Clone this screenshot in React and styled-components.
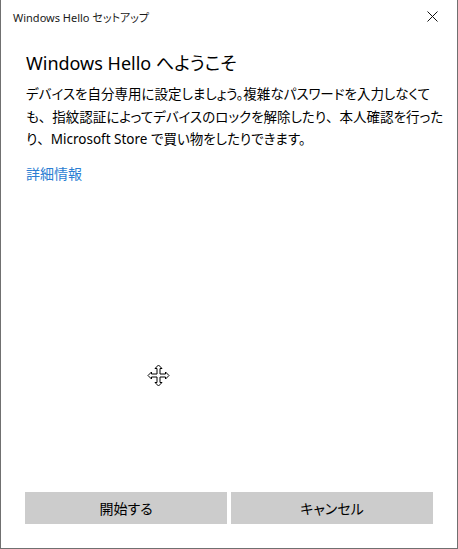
import styled, { createGlobalStyle } from "styled-components";

const Global = createGlobalStyle`
  html, body {
    margin: 0;
    padding: 0;
    background: #ffffff;
  }
  body {
    font-family: "Segoe UI", "Noto Sans", "Noto Sans CJK JP", sans-serif;
  }
`;

const Window = styled.div`
  position: relative;
  width: 458px;
  height: 549px;
  box-sizing: border-box;
  border: 1px solid #707070;
  border-top: none;
  background: #ffffff;
  display: flex;
  flex-direction: column;
`;

const TitleBar = styled.div`
  height: 33px;
  display: flex;
  align-items: center;
  justify-content: space-between;
  padding-left: 12px;
  font-family: "Noto Sans", "Noto Sans CJK JP", sans-serif;
  font-size: 11px;
  color: #1a1a1a;
  font-feature-settings: "palt";
`;

const CloseButton = styled.div`
  width: 46px;
  height: 33px;
  display: flex;
  align-items: center;
  justify-content: center;
  margin-right: 2px;
`;

const Content = styled.div`
  flex: 1;
  padding: 15px 25px 0 25px;
  display: flex;
  flex-direction: column;
`;

const Heading = styled.h1`
  margin: 0;
  font-family: "Noto Sans", "Noto Sans CJK JP", sans-serif;
  font-weight: 400;
  font-size: 18px;
  line-height: 30px;
  color: #000000;
  font-feature-settings: "palt";
`;

const Body = styled.p`
  margin: 5px 0 0 0;
  font-family: "Noto Sans", "Noto Sans CJK JP", sans-serif;
  font-size: 13.5px;
  line-height: 22.5px;
  color: #000000;
  font-feature-settings: "palt";
  white-space: nowrap;
`;

const Comma = styled.span`
  font-feature-settings: normal;
`;

const Link = styled.a`
  margin-top: 12px;
  font-family: "Noto Sans CJK JP", sans-serif;
  font-size: 14px;
  line-height: 20px;
  color: #2b7ed3;
  text-decoration: none;
  align-self: flex-start;
`;

const Footer = styled.div`
  display: grid;
  grid-template-columns: 202px 202px;
  gap: 4px;
  padding: 0 24px 24px 24px;
`;

const Button = styled.button`
  height: 32px;
  border: none;
  background: #cccccc;
  font-family: "Noto Sans CJK JP", sans-serif;
  font-size: 14px;
  color: #000000;
  padding: 0;
  font-feature-settings: "palt";
`;

const Cursor = styled.div`
  position: absolute;
  left: 146px;
  top: 364px;
  width: 23px;
  height: 23px;
`;

export default function App() {
  return (
    <>
      <Global />
      <Window>
        <TitleBar>
          <span>Windows Hello セットアップ</span>
          <CloseButton>
            <svg width="11" height="11" viewBox="0 0 11 11">
              <path d="M0.5 0.5 L10.5 10.5 M10.5 0.5 L0.5 10.5" stroke="#111" strokeWidth="1" />
            </svg>
          </CloseButton>
        </TitleBar>
        <Content>
          <Heading>Windows Hello へようこそ</Heading>
          <Body>
            デバイスを自分専用に設定しましょう。複雑なパスワードを入力しなくて
            <br />
            も<Comma>、</Comma>指紋認証によってデバイスのロックを解除したり<Comma>、</Comma>本人確認を行った
            <br />
            り<Comma>、</Comma>Microsoft Store で買い物をしたりできます。
          </Body>
          <Link href="#">詳細情報</Link>
        </Content>
        <Footer>
          <Button>開始する</Button>
          <Button>キャンセル</Button>
        </Footer>
        <Cursor>
          <svg width="23" height="23" viewBox="0 0 23 23">
            <path
              d="M11.5 1 L15 4.5 L13 4.5 L13 10 L18.5 10 L18.5 8 L22 11.5 L18.5 15 L18.5 13 L13 13 L13 18.5 L15 18.5 L11.5 22 L8 18.5 L10 18.5 L10 13 L4.5 13 L4.5 15 L1 11.5 L4.5 8 L4.5 10 L10 10 L10 4.5 L8 4.5 Z"
              fill="#fff"
              stroke="#000"
              strokeWidth="1"
              strokeLinejoin="miter"
            />
          </svg>
        </Cursor>
      </Window>
    </>
  );
}
